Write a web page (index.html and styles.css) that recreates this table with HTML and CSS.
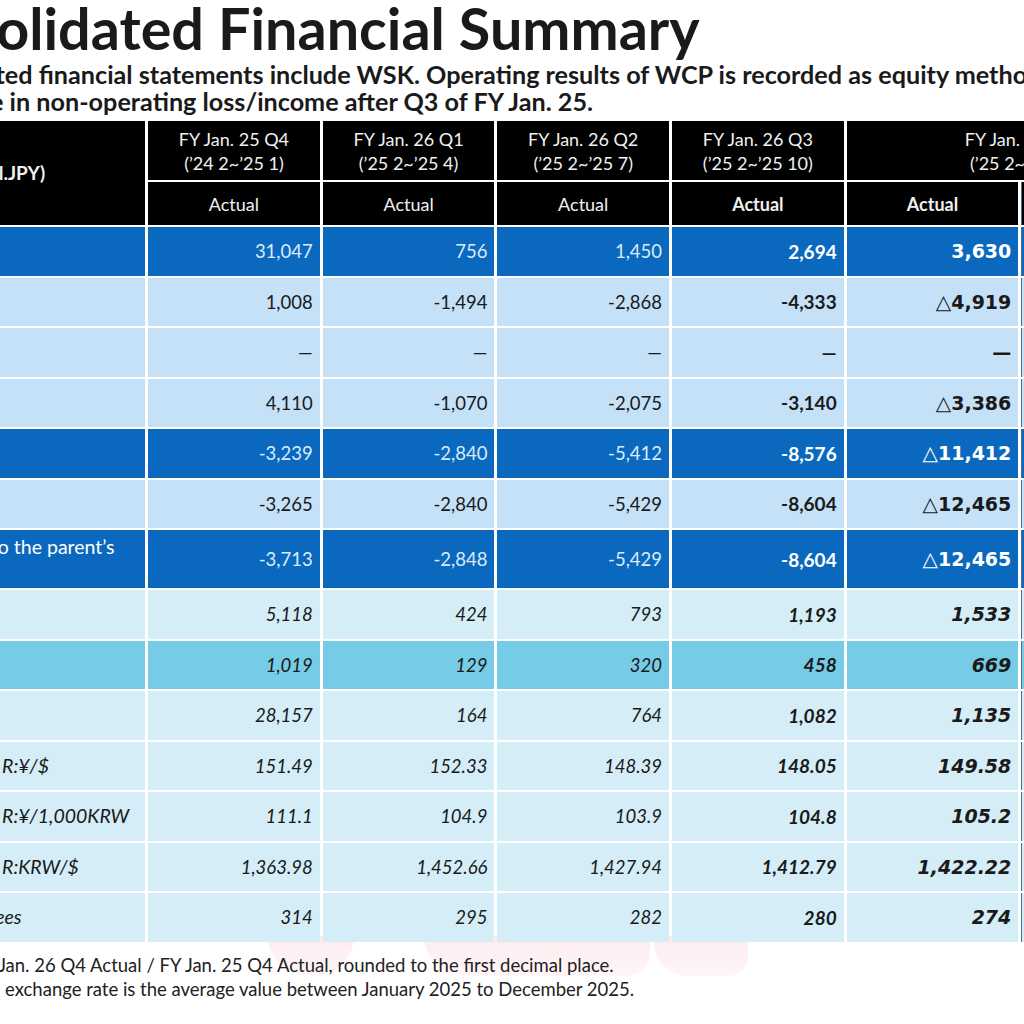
FILE: index.html
```html
<!DOCTYPE html>
<html lang="en">
  <head>
    <meta charset="UTF-8" />
    <meta name="viewport" content="width=device-width, initial-scale=1.0" />
    <title>Consolidated Financial Summary</title>
    <link rel="stylesheet" href="styles.css">
  </head>
  <body>
    <div class="watermark">
      <span class="blob blob-a"></span>
      <span class="blob blob-b"></span>
      <span class="blob blob-c"></span>
    </div>

    <div class="slide">
      <h1 class="title">Consolidated Financial Summary</h1>
      <div class="lead">
        <p>※Consolidated financial statements include WSK. Operating results of WCP is recorded as equity method investment income/</p>
        <p>loss as share in non-operating loss/income after Q3 of FY Jan. 25.</p>
      </div>

      <table class="summary">
        <colgroup>
          <col class="col-label">
          <col class="col-num">
          <col class="col-num">
          <col class="col-num">
          <col class="col-num">
          <col class="col-num">
          <col class="col-num">
        </colgroup>
        <thead>
          <tr class="head-top">
            <th class="unit" rowspan="2">(Unit: Mil.JPY)</th>
            <th>FY Jan. 25 Q4<br>(’24 2~’25 1)</th>
            <th>FY Jan. 26 Q1<br>(’25 2~’25 4)</th>
            <th>FY Jan. 26 Q2<br>(’25 2~’25 7)</th>
            <th>FY Jan. 26 Q3<br>(’25 2~’25 10)</th>
            <th colspan="2">FY Jan. 26 Q4<br>(’25 2~’26 1)</th>
          </tr>
          <tr class="head-sub">
            <th>Actual</th>
            <th>Actual</th>
            <th>Actual</th>
            <th class="strong">Actual</th>
            <th class="strong">Actual</th>
            <th class="strong yoy">YoY</th>
          </tr>
        </thead>
        <tbody>
          <tr class="dark">
            <td class="label">Net sales</td>
            <td>31,047</td><td>756</td><td>1,450</td>
            <td class="q3">2,694</td><td class="q4">3,630</td><td class="yoy">11.7%</td>
          </tr>
          <tr class="light">
            <td class="label">Operating income</td>
            <td>1,008</td><td>-1,494</td><td>-2,868</td>
            <td class="q3">-4,333</td><td class="q4"><span class="tri">△</span>4,919</td><td class="yoy">—</td>
          </tr>
          <tr class="light">
            <td class="label">Equity income</td>
            <td>—</td><td>—</td><td>—</td>
            <td class="q3">—</td><td class="q4">—</td><td class="yoy">—</td>
          </tr>
          <tr class="light">
            <td class="label">Non-op. P/L</td>
            <td>4,110</td><td>-1,070</td><td>-2,075</td>
            <td class="q3">-3,140</td><td class="q4"><span class="tri">△</span>3,386</td><td class="yoy">—</td>
          </tr>
          <tr class="dark">
            <td class="label">Ordinary income</td>
            <td>-3,239</td><td>-2,840</td><td>-5,412</td>
            <td class="q3">-8,576</td><td class="q4"><span class="tri">△</span>11,412</td><td class="yoy">—</td>
          </tr>
          <tr class="light">
            <td class="label">Pre-tax income</td>
            <td>-3,265</td><td>-2,840</td><td>-5,429</td>
            <td class="q3">-8,604</td><td class="q4"><span class="tri">△</span>12,465</td><td class="yoy">—</td>
          </tr>
          <tr class="dark tall">
            <td class="label">Net income attributable to the parent’s shareholders</td>
            <td>-3,713</td><td>-2,848</td><td>-5,429</td>
            <td class="q3">-8,604</td><td class="q4"><span class="tri">△</span>12,465</td><td class="yoy">—</td>
          </tr>
          <tr class="pale">
            <td class="label">Capex</td>
            <td>5,118</td><td>424</td><td>793</td>
            <td class="q3">1,193</td><td class="q4">1,533</td><td class="yoy">30.0%</td>
          </tr>
          <tr class="mid">
            <td class="label">Depreciation</td>
            <td>1,019</td><td>129</td><td>320</td>
            <td class="q3">458</td><td class="q4">669</td><td class="yoy">65.7%</td>
          </tr>
          <tr class="pale">
            <td class="label">R&amp;D</td>
            <td>28,157</td><td>164</td><td>764</td>
            <td class="q3">1,082</td><td class="q4">1,135</td><td class="yoy">4.0%</td>
          </tr>
          <tr class="pale">
            <td class="label sub">Avg. FX R:¥/$</td>
            <td>151.49</td><td>152.33</td><td>148.39</td>
            <td class="q3">148.05</td><td class="q4">149.58</td><td class="yoy">98.7%</td>
          </tr>
          <tr class="pale">
            <td class="label sub">Avg. FX R:¥/1,000KRW</td>
            <td>111.1</td><td>104.9</td><td>103.9</td>
            <td class="q3">104.8</td><td class="q4">105.2</td><td class="yoy">94.7%</td>
          </tr>
          <tr class="pale">
            <td class="label sub">Avg. FX R:KRW/$</td>
            <td>1,363.98</td><td>1,452.66</td><td>1,427.94</td>
            <td class="q3">1,412.79</td><td class="q4">1,422.22</td><td class="yoy">104.3%</td>
          </tr>
          <tr class="pale">
            <td class="label sub">Employees</td>
            <td>314</td><td>295</td><td>282</td>
            <td class="q3">280</td><td class="q4">274</td><td class="yoy">87.3%</td>
          </tr>
        </tbody>
      </table>

      <div class="notes">
        <p>※YoY: FY Jan. 26 Q4 Actual / FY Jan. 25 Q4 Actual, rounded to the first decimal place.</p>
        <p>※Average exchange rate is the average value between January 2025 to December 2025.</p>
      </div>
    </div>
  </body>
</html>
```

FILE: styles.css
```css
* {
  margin: 0;
  padding: 0;
  box-sizing: border-box;
}

body {
  width: 1024px;
  height: 1024px;
  overflow: hidden;
  position: relative;
  background: white;
  color: #1a1a1a;
  font-family: Lato, 'Noto Sans', sans-serif;
}

.slide {
  position: relative;
  margin-left: -225px;
  width: 1600px;
}

/* faint pink logo shapes behind the notes */
.watermark {
  position: absolute;
  left: 268px;
  top: 936px;
  width: 490px;
  height: 40px;
}

.blob {
  position: absolute;
  top: 0;
  height: 40px;
  background: linear-gradient(180deg, #fdebef, #fff6f8);
  border-radius: 0 0 40px 40px;
}

.blob-a { left: 0; width: 86px; }
.blob-b { left: 156px; width: 226px; border-radius: 0 0 30px 50px; }
.blob-c { left: 386px; width: 94px; border-radius: 0 0 20px 34px; }

.title {
  font-size: 57.5px;
  font-weight: 700;
  line-height: 56px;
  color: #1a1a1a;
  white-space: nowrap;
  padding-left: 93px;
}

.lead {
  margin-top: 5px;
  font-size: 25.2px;
  font-weight: 700;
  line-height: 27px;
  white-space: nowrap;
  padding-left: 89px;
}

.summary {
  border-collapse: separate;
  border-spacing: 3px 2.5px;
  table-layout: fixed;
  width: 1424px;
  margin-left: -3px;
  margin-top: 4px;
}

.col-label { width: 370px; }
.col-num { width: 171.6px; }

.summary th {
  background: #000;
  color: #f0f0f0;
  font-weight: 400;
  font-size: 18px;
  line-height: 24px;
  text-align: center;
}

.head-top { height: 59px; }
.head-sub { height: 43px; }

.summary th.unit {
  font-size: 19px;
  font-weight: 700;
  padding-left: 50px;
}

.summary th.strong {
  font-weight: 700;
}

.summary td {
  height: 48.5px;
  font-size: 18.5px;
  text-align: right;
  padding: 0 7px;
  white-space: nowrap;
}

.summary td.label {
  text-align: left;
  font-size: 19.5px;
  padding-left: 8px;
  white-space: normal;
  line-height: 24px;
}

.summary td.label.sub {
  padding-left: 161px;
}

.summary td.q3 {
  font-weight: 700;
  font-size: 19px;
}

.summary td.q4 {
  font-family: 'DejaVu Sans', Verdana, sans-serif;
  font-weight: 700;
  font-size: 19px;
}

.tri {
  font-weight: 400;
  font-size: 20px;
}

.summary .yoy {
  border-left: 1px solid #4d6f8c;
}

.tall td { height: 58px; }
.tall td.label { vertical-align: top; padding-top: 5px; }

/* row colours */
.dark td {
  background: #0a69be;
  color: #d9ebfb;
}

.dark td.q3,
.dark td.q4,
.dark td.label {
  color: #fff;
}

.light td { background: #c4e1f8; }
.pale td { background: #d4edf7; }
.mid td { background: #76cbe6; }

.pale td,
.mid td {
  font-style: italic;
}

.notes {
  margin-top: 9.5px;
  padding-left: 144px;
  font-size: 18.5px;
  line-height: 24px;
  color: #222;
  white-space: nowrap;
}
```
